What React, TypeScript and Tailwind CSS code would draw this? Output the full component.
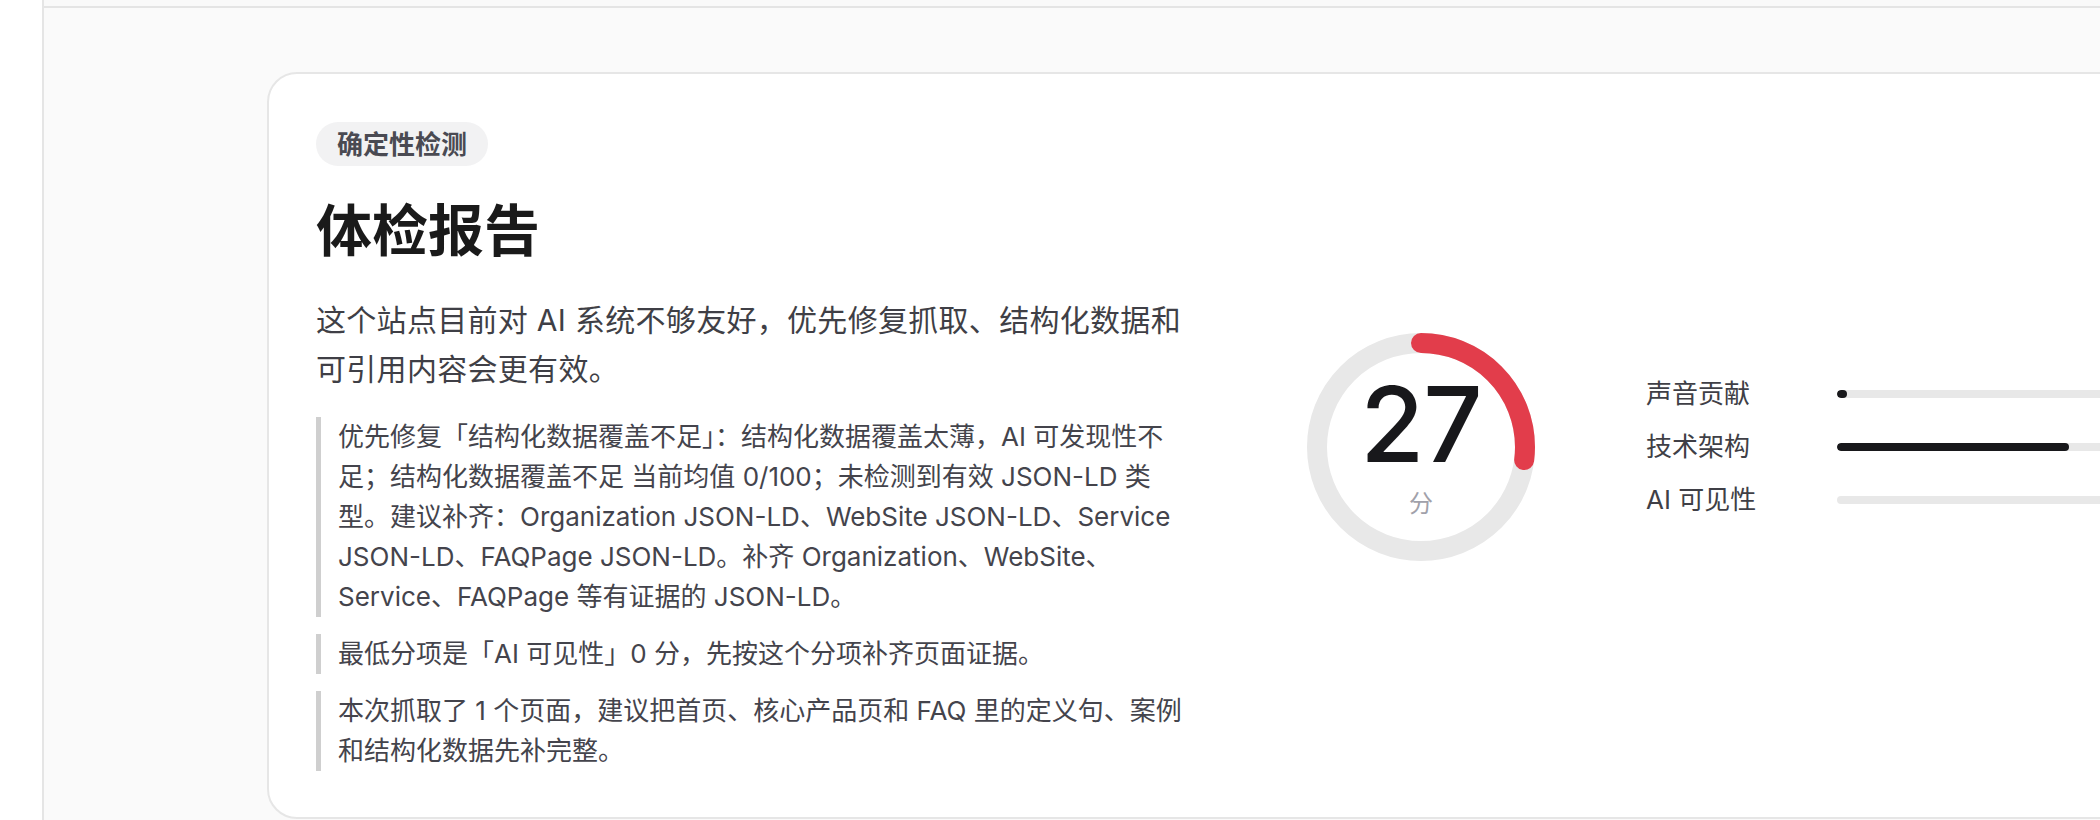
import React from "react";

const bars = [
  { label: "声音贡献", value: 3 },
  { label: "技术架构", value: 72.5 },
  { label: "AI 可见性", value: 0 },
];

function ScoreRing({ score }: { score: number }) {
  const r = 104;
  const c = 2 * Math.PI * r;
  const len = (score / 100) * c;
  return (
    <div className="relative w-[228px] h-[228px] flex-none">
      <svg width="228" height="228" viewBox="0 0 228 228" className="absolute inset-0">
        <circle cx="114" cy="114" r={r} fill="none" stroke="#e8e8e8" strokeWidth="20" />
        <circle
          cx="114"
          cy="114"
          r={r}
          fill="none"
          stroke="#e23d4b"
          strokeWidth="20"
          strokeLinecap="round"
          strokeDasharray={`${len} ${c}`}
          transform="rotate(-90 114 114)"
        />
      </svg>
      <div className="absolute inset-0 flex flex-col items-center justify-center">
        <div className="text-[104px] leading-[102px] font-medium tracking-[-1px] text-[#18181b]">{score}</div>
        <div className="mt-[13px] text-[24px] leading-[32px] text-[#a1a1aa]">分</div>
      </div>
    </div>
  );
}

export default function App() {
  return (
    <div className="w-[2100px] h-[820px] overflow-hidden bg-white flex font-['Inter','Noto_Sans_CJK_SC',sans-serif]">
      <div className="w-[44px] flex-none bg-white border-r-2 border-[#e5e5e5]" />
      <div className="flex-1 min-w-0 bg-[#fafafa] flex flex-col">
        <div className="h-[8px] flex-none bg-[#f9f9f9] border-b-2 border-[#e4e4e4]" />
        <div className="pt-[64px] pl-[223px]">
          <div className="w-[1900px] rounded-[30px] border-2 border-[#e6e6e6] bg-white pl-[47px] pt-[48px] pb-[46px] flex items-center gap-[121px]">
            <div className="w-[870px] flex-none flex flex-col items-start">
              <span className="inline-flex items-center h-[44px] px-[21px] rounded-full bg-[#f2f2f3] text-[26px] font-semibold text-[#4a4a52]">
                确定性检测
              </span>
              <h1 className="mt-[31px] text-[56px] leading-[68px] font-bold text-[#1a1a1a]">体检报告</h1>
              <p className="mt-[31px] text-[30px] leading-[49px] tracking-[0.3px] text-[#3f3f46] whitespace-nowrap">
                这个站点目前对 AI 系统不够友好，优先修复抓取、结构化数据和
                <br />
                可引用内容会更有效。
              </p>
              <div className="mt-[23px] flex flex-col gap-[17px] text-[26px] leading-[40px] text-[#44444c]">
                <div className="border-l-[5px] border-[#cfcfcf] pl-[17px] whitespace-nowrap">
                  优先修复「结构化数据覆盖不足」：结构化数据覆盖太薄，AI 可发现性不
                  <br />
                  足；结构化数据覆盖不足 当前均值 0/100；未检测到有效 JSON-LD 类
                  <br />
                  型。建议补齐：Organization JSON-LD、WebSite JSON-LD、Service
                  <br />
                  JSON-LD、FAQPage JSON-LD。补齐 Organization、WebSite、
                  <br />
                  Service、FAQPage 等有证据的 JSON-LD。
                </div>
                <div className="border-l-[5px] border-[#cfcfcf] pl-[17px] whitespace-nowrap">
                  最低分项是「AI 可见性」0 分，先按这个分项补齐页面证据。
                </div>
                <div className="border-l-[5px] border-[#cfcfcf] pl-[17px] whitespace-nowrap">
                  本次抓取了 1 个页面，建议把首页、核心产品页和 FAQ 里的定义句、案例
                  <br />
                  和结构化数据先补完整。
                </div>
              </div>
            </div>
            <div className="flex-none flex items-center gap-[111px]">
              <ScoreRing score={27} />
              <div className="flex flex-col gap-[13px]">
                {bars.map((b) => (
                  <div key={b.label} className="flex items-center h-[40px]">
                    <div className="w-[191px] flex-none text-[26px] leading-[40px] text-[#3f3f46]">{b.label}</div>
                    <div className="w-[320px] h-[8px] rounded-full bg-[#e8e8e8] overflow-hidden flex-none">
                      <div className="h-full rounded-full bg-[#18181b]" style={{ width: `${b.value}%` }} />
                    </div>
                  </div>
                ))}
              </div>
            </div>
          </div>
        </div>
      </div>
    </div>
  );
}
